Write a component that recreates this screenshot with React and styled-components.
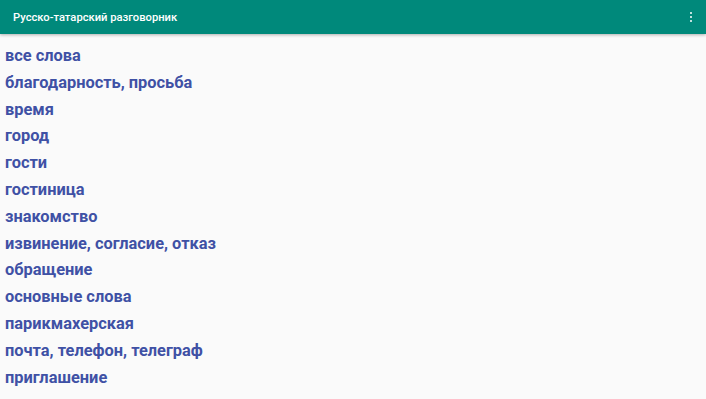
import React from 'react'
import styled, { createGlobalStyle } from 'styled-components'

const GlobalStyle = createGlobalStyle`
  html, body {
    margin: 0;
    padding: 0;
    background: #fafafa;
    font-family: Roboto, 'Liberation Sans', sans-serif;
  }
`

const Page = styled.div`
  width: 706px;
  height: 399px;
  overflow: hidden;
  background: #fafafa;
`

const Toolbar = styled.header`
  height: 34px;
  background: #00897b;
  display: flex;
  align-items: center;
  justify-content: space-between;
  padding: 0 13px 0 13px;
  box-shadow: 0 1px 3px rgba(0, 0, 0, 0.3);
  position: relative;
`

const Title = styled.h1`
  margin: 0;
  font-size: 11.2px;
  font-weight: 500;
  color: #ffffff;
`

const MenuDots = styled.div`
  display: flex;
  flex-direction: column;
  gap: 1.5px;
  margin-right: 1px;
  span {
    width: 2.5px;
    height: 2.5px;
    background: #fff;
    border-radius: 50%;
  }
`

const List = styled.ul`
  list-style: none;
  margin: 0;
  padding: 9px 0 0 5px;
`

const Item = styled.li`
  height: 26.8px;
  line-height: 26.8px;
  font-size: 16.4px;
  font-weight: 700;
  color: #3f51a5;
`

const topics = [
  'все слова',
  'благодарность, просьба',
  'время',
  'город',
  'гости',
  'гостиница',
  'знакомство',
  'извинение, согласие, отказ',
  'обращение',
  'основные слова',
  'парикмахерская',
  'почта, телефон, телеграф',
  'приглашение',
]

export default function App() {
  return (
    <Page>
      <GlobalStyle />
      <Toolbar>
        <Title>Русско-татарский разговорник</Title>
        <MenuDots>
          <span />
          <span />
          <span />
        </MenuDots>
      </Toolbar>
      <List>
        {topics.map((t) => (
          <Item key={t}>{t}</Item>
        ))}
      </List>
    </Page>
  )
}
